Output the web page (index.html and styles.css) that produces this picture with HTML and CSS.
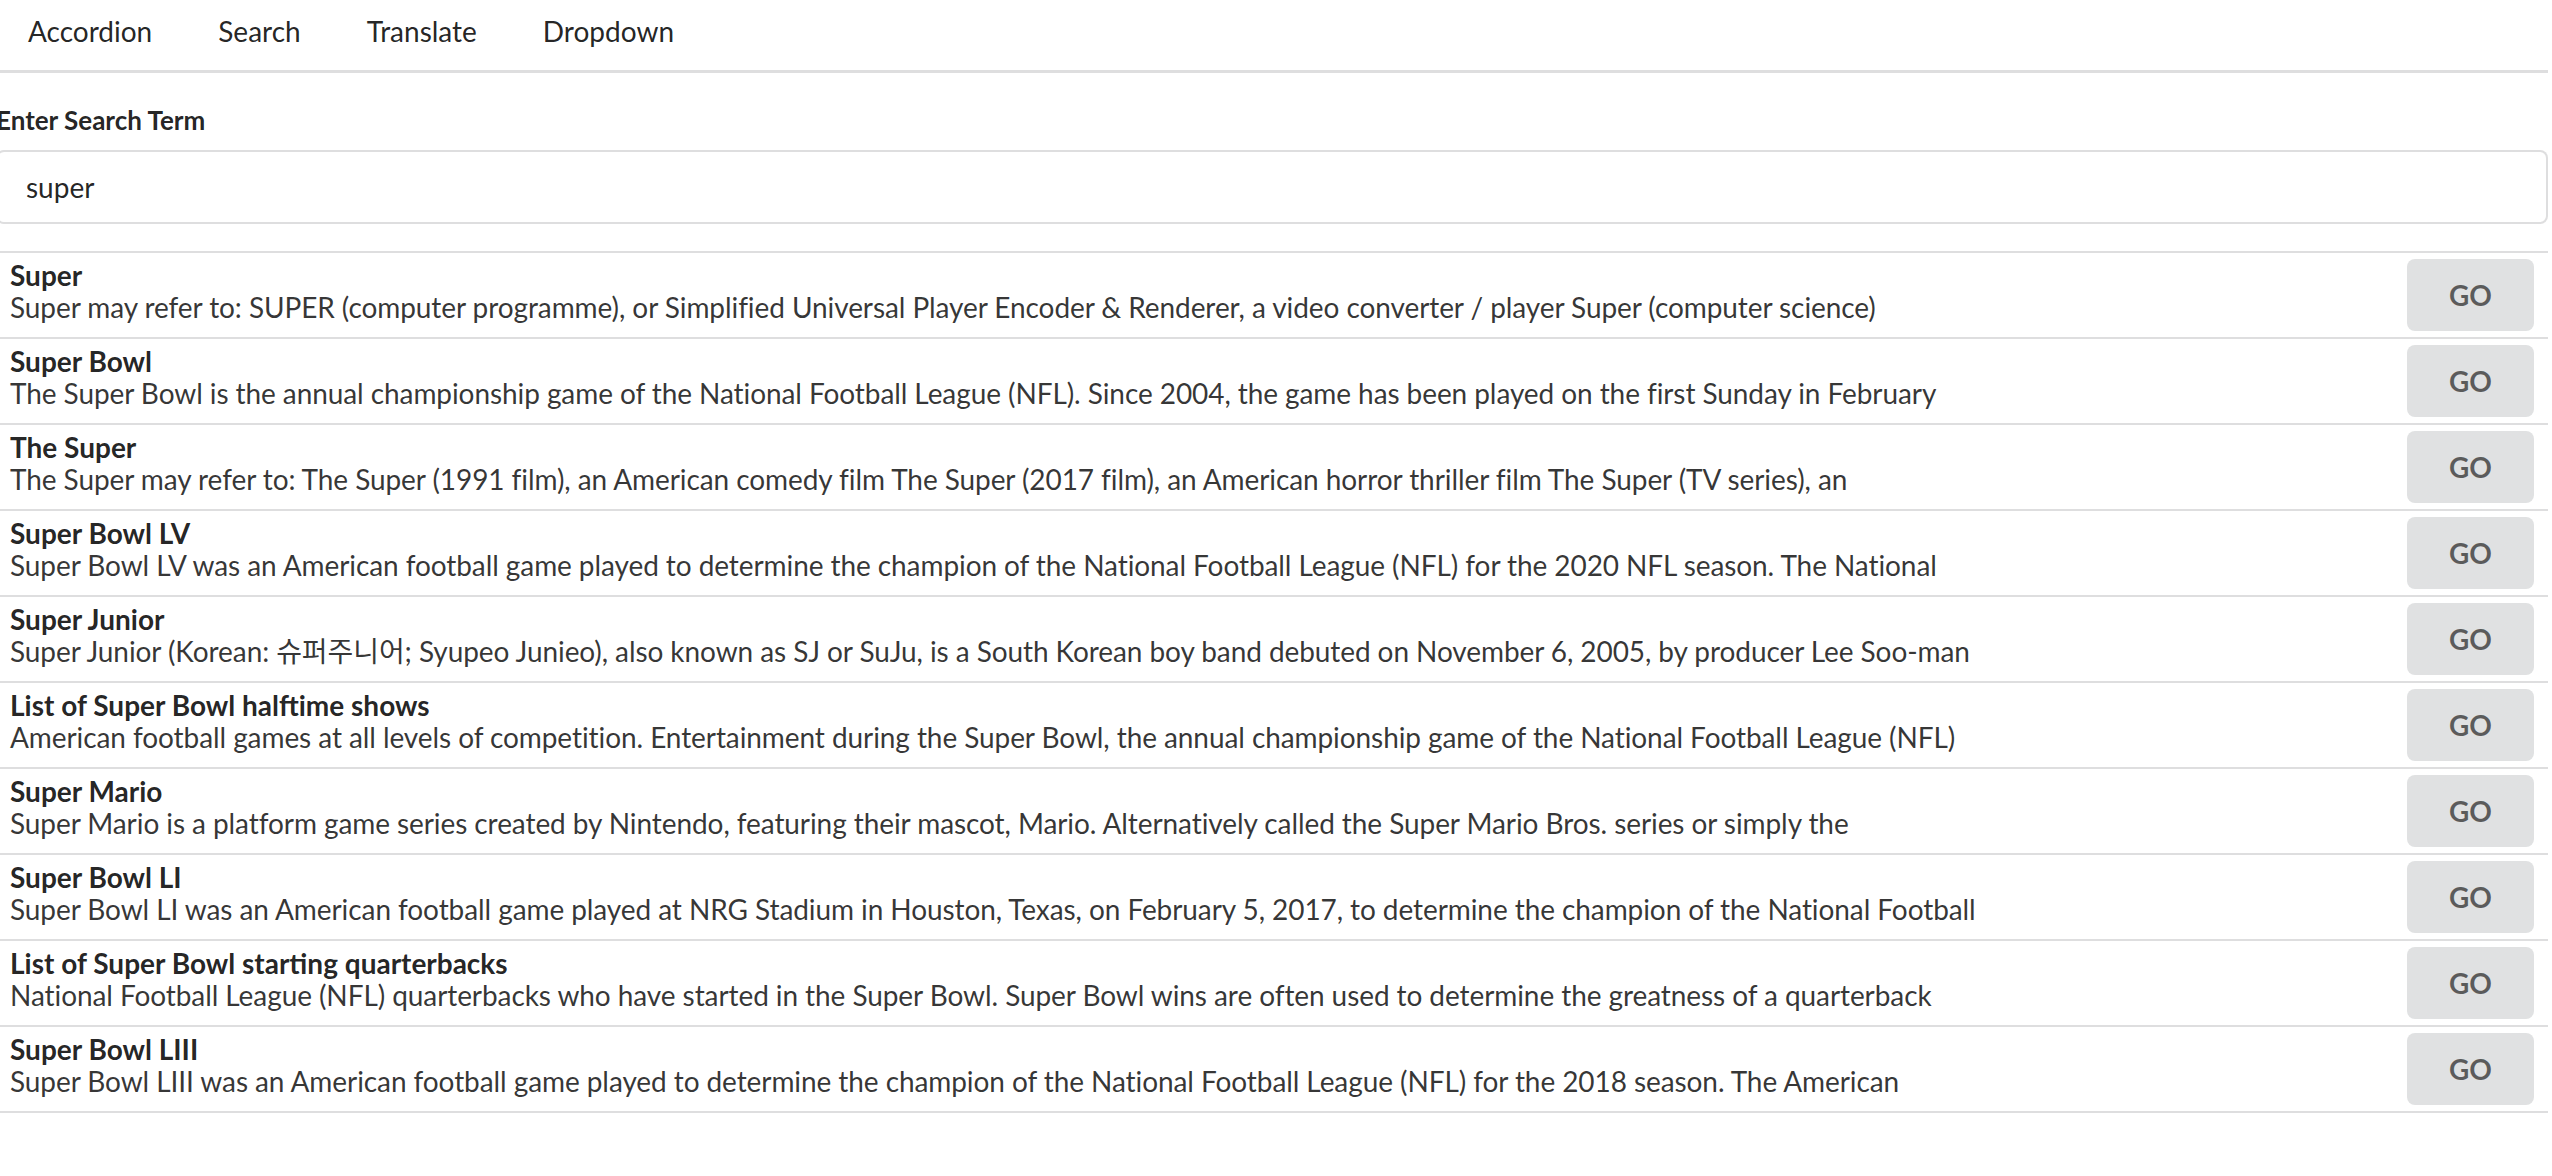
FILE: index.html
```html
<!DOCTYPE html>
<html>
<head>
<meta charset="utf-8">
<link rel="stylesheet" href="styles.css">
</head>
<body>
<div class="page">
  <nav class="menu">
    <a class="item">Accordion</a>
    <a class="item">Search</a>
    <a class="item">Translate</a>
    <a class="item">Dropdown</a>
  </nav>
  <div class="form">
    <label class="label">Enter Search Term</label>
    <input class="input" type="text" value="super">
  </div>
  <div class="list">
    <div class="row"><div class="content"><div class="header">Super</div><div class="description">Super may refer to: SUPER (computer programme), or Simplified Universal Player Encoder &amp; Renderer, a video converter / player Super (computer science)</div></div><button class="go">GO</button></div>
    <div class="row"><div class="content"><div class="header">Super Bowl</div><div class="description">The Super Bowl is the annual championship game of the National Football League (NFL). Since 2004, the game has been played on the first Sunday in February</div></div><button class="go">GO</button></div>
    <div class="row"><div class="content"><div class="header">The Super</div><div class="description">The Super may refer to: The Super (1991 film), an American comedy film The Super (2017 film), an American horror thriller film The Super (TV series), an</div></div><button class="go">GO</button></div>
    <div class="row"><div class="content"><div class="header">Super Bowl LV</div><div class="description">Super Bowl LV was an American football game played to determine the champion of the National Football League (NFL) for the 2020 NFL season. The National</div></div><button class="go">GO</button></div>
    <div class="row"><div class="content"><div class="header">Super Junior</div><div class="description">Super Junior (Korean: 슈퍼주니어; Syupeo Junieo), also known as SJ or SuJu, is a South Korean boy band debuted on November 6, 2005, by producer Lee Soo-man</div></div><button class="go">GO</button></div>
    <div class="row"><div class="content"><div class="header">List of Super Bowl halftime shows</div><div class="description">American football games at all levels of competition. Entertainment during the Super Bowl, the annual championship game of the National Football League (NFL)</div></div><button class="go">GO</button></div>
    <div class="row"><div class="content"><div class="header">Super Mario</div><div class="description">Super Mario is a platform game series created by Nintendo, featuring their mascot, Mario. Alternatively called the Super Mario Bros. series or simply the</div></div><button class="go">GO</button></div>
    <div class="row"><div class="content"><div class="header">Super Bowl LI</div><div class="description">Super Bowl LI was an American football game played at NRG Stadium in Houston, Texas, on February 5, 2017, to determine the champion of the National Football</div></div><button class="go">GO</button></div>
    <div class="row"><div class="content"><div class="header">List of Super Bowl starting quarterbacks</div><div class="description">National Football League (NFL) quarterbacks who have started in the Super Bowl. Super Bowl wins are often used to determine the greatness of a quarterback</div></div><button class="go">GO</button></div>
    <div class="row"><div class="content"><div class="header">Super Bowl LIII</div><div class="description">Super Bowl LIII was an American football game played to determine the champion of the National Football League (NFL) for the 2018 season. The American</div></div><button class="go">GO</button></div>
  </div>
</div>
</body>
</html>
```
FILE: styles.css
```css
html, body {
  margin: 0;
  padding: 0;
  background: #ffffff;
}
body {
  font-family: Lato, "Noto Sans CJK KR", sans-serif;
  font-size: 28px;
  color: rgba(0, 0, 0, 0.87);
}
.page {
  margin-left: -4px;
  margin-right: 4px;
}
.menu {
  display: flex;
  border-bottom: 3px solid rgba(34, 36, 38, 0.15);
}
.menu .item {
  display: block;
  padding: 17px 34px 25px 32px;
  line-height: 28px;
  color: rgba(0, 0, 0, 0.87);
  cursor: pointer;
}
.form {
  padding-top: 29px;
}
.label {
  display: block;
  font-size: 26px;
  font-weight: 700;
  line-height: 37px;
  margin-bottom: 11px;
}
.input {
  display: block;
  box-sizing: border-box;
  width: 100%;
  margin: 0;
  height: 74px;
  padding: 19px 28px;
  font-family: Lato, sans-serif;
  font-size: 28px;
  line-height: 34px;
  color: rgba(0, 0, 0, 0.87);
  border: 2px solid rgba(34, 36, 38, 0.15);
  border-radius: 8px;
  outline: none;
  background: #fff;
}
.list {
  margin-top: 27px;
}
.row {
  display: flex;
  align-items: flex-start;
  padding: 6px 14px;
  border-top: 2px solid rgba(34, 36, 38, 0.15);
}
.row:last-child {
  border-bottom: 2px solid rgba(34, 36, 38, 0.15);
}
.content {
  flex: 1;
  line-height: 32px;
}
.header {
  font-weight: 700;
  color: rgba(0, 0, 0, 0.87);
}
.description {
  color: rgba(0, 0, 0, 0.8);
  white-space: nowrap;
  letter-spacing: -0.08px;
}
.go {
  flex: none;
  border: none;
  margin: 0;
  background: #e0e1e2;
  color: rgba(0, 0, 0, 0.6);
  font-family: Lato, sans-serif;
  font-weight: 700;
  font-size: 28px;
  line-height: 28px;
  padding: 22px 42px;
  border-radius: 8px;
  cursor: pointer;
}
```
